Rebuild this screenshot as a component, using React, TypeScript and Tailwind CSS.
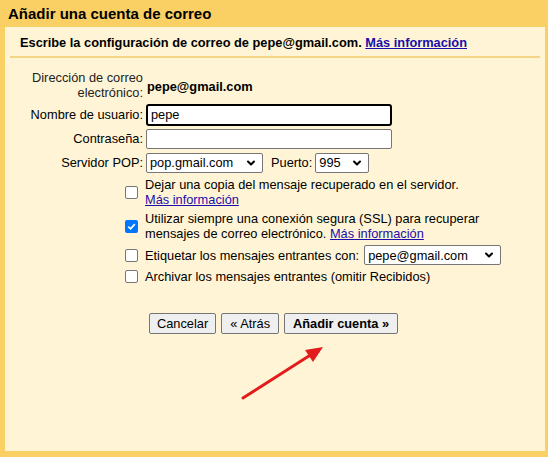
import { ChevronDown } from "lucide-react";

function FakeSelect({ value, width }: { value: string; width: string }) {
  return (
    <div
      className={`flex h-[20px] items-center justify-between rounded-[2px] border border-[#767676] bg-white pl-[3px] pr-[5px] ${width}`}
    >
      <span>{value}</span>
      <ChevronDown className="h-[12px] w-[12px] text-black" strokeWidth={4} />
    </div>
  );
}

function Check({ checked = false }: { checked?: boolean }) {
  return checked ? (
    <span className="flex h-[13px] w-[13px] items-center justify-center rounded-[2px] bg-[#0075ff]">
      <svg viewBox="0 0 12 12" className="h-[11px] w-[11px]">
        <path d="M2.5 6.2 L5 8.6 L9.6 3.4" fill="none" stroke="white" strokeWidth="1.8" />
      </svg>
    </span>
  ) : (
    <span className="h-[13px] w-[13px] rounded-[2px] border border-[#767676] bg-white" />
  );
}

export default function App() {
  return (
    <div className="relative flex h-[457px] w-[548px] flex-col bg-[#fad065] font-['Liberation_Sans',Arial,sans-serif] text-[12.8px] text-black">
      {/* Title */}
      <div className="h-[27px] pl-[8px] text-[15px] font-bold leading-[27px] text-black">
        Añadir una cuenta de correo
      </div>

      <div className="mb-[6px] ml-[5px] mr-[3px] flex-1 bg-[#fff5d6]">
        {/* Intro */}
        <div className="mx-[5px] border-b-2 border-[#f2d684] pb-[6px] pl-[10px] pt-[8px] font-bold leading-[15px]">
          Escribe la configuración de correo de pepe@gmail.com.{" "}
          <a href="#" className="text-[#1a0dab] underline">
            Más información
          </a>
        </div>

        {/* Fields */}
        <div className="mt-[12px] flex flex-col">
          <div className="flex items-center">
            <div className="w-[138px] text-right leading-[15px] text-[#222]">
              Dirección de correo
              <br />
              electrónico:
            </div>
            <div className="ml-[4px] mt-[4px] font-bold">pepe@gmail.com</div>
          </div>

          <div className="mt-[4px] flex h-[22px] items-center">
            <div className="w-[138px] text-right">Nombre de usuario:</div>
            <div className="ml-[3px] flex h-[22px] w-[246px] items-center rounded-[3px] border-2 border-black bg-white pl-[3px]">
              pepe
            </div>
          </div>

          <div className="mt-[3px] flex h-[20px] items-center">
            <div className="w-[138px] text-right">Contraseña:</div>
            <div className="ml-[3px] h-[20px] w-[246px] rounded-[2px] border border-[#767676] bg-white" />
          </div>

          <div className="mt-[4px] flex h-[20px] items-center">
            <div className="w-[138px] text-right">Servidor POP:</div>
            <div className="ml-[3px] flex items-center">
              <FakeSelect value="pop.gmail.com" width="w-[117px]" />
              <span className="ml-[8px] mr-[3px]">Puerto:</span>
              <FakeSelect value="995" width="w-[54px]" />
            </div>
          </div>

          {/* Options */}
          <div className="mt-[4px] flex flex-col gap-[4px] leading-[15px]">
            <div className="flex items-center">
              <div className="flex w-[138px] justify-end pr-[5px]">
                <Check />
              </div>
              <div className="ml-[2px]">
                Dejar una copia del mensaje recuperado en el servidor.
                <br />
                <a href="#" className="text-[#1a0dab] underline">
                  Más información
                </a>
              </div>
            </div>

            <div className="flex items-center">
              <div className="flex w-[138px] justify-end pr-[5px]">
                <Check checked />
              </div>
              <div className="ml-[2px]">
                Utilizar siempre una conexión segura (SSL) para recuperar
                <br />
                mensajes de correo electrónico.{" "}
                <a href="#" className="text-[#1a0dab] underline">
                  Más información
                </a>
              </div>
            </div>

            <div className="flex h-[20px] items-center">
              <div className="flex w-[138px] justify-end pr-[5px]">
                <Check />
              </div>
              <div className="ml-[2px] flex items-center">
                <span className="mr-[5px]">Etiquetar los mensajes entrantes con:</span>
                <FakeSelect value="pepe@gmail.com" width="w-[137px]" />
              </div>
            </div>

            <div className="flex items-center">
              <div className="flex w-[138px] justify-end pr-[5px]">
                <Check />
              </div>
              <div className="ml-[2px]">Archivar los mensajes entrantes (omitir Recibidos)</div>
            </div>
          </div>

          {/* Buttons */}
          <div className="ml-[144px] mt-[29px] flex gap-[5px]">
            <button className="h-[21px] rounded-[2px] border border-[#767676] bg-[#efefef] px-[7px] text-[12.8px]">
              Cancelar
            </button>
            <button className="h-[21px] rounded-[2px] border border-[#767676] bg-[#efefef] px-[8px] text-[12.8px]">
              « Atrás
            </button>
            <button className="h-[21px] rounded-[2px] border border-[#767676] bg-[#efefef] px-[8px] text-[12.8px] font-bold">
              Añadir cuenta »
            </button>
          </div>
        </div>
      </div>

      {/* Red arrow annotation */}
      <svg className="pointer-events-none absolute left-0 top-0" width="548" height="457">
        <line x1="243" y1="398" x2="312" y2="354" stroke="#e21c1c" strokeWidth="3" strokeLinecap="round" />
        <polygon points="323,347 305,350 313,362" fill="#e21c1c" />
      </svg>
    </div>
  );
}
